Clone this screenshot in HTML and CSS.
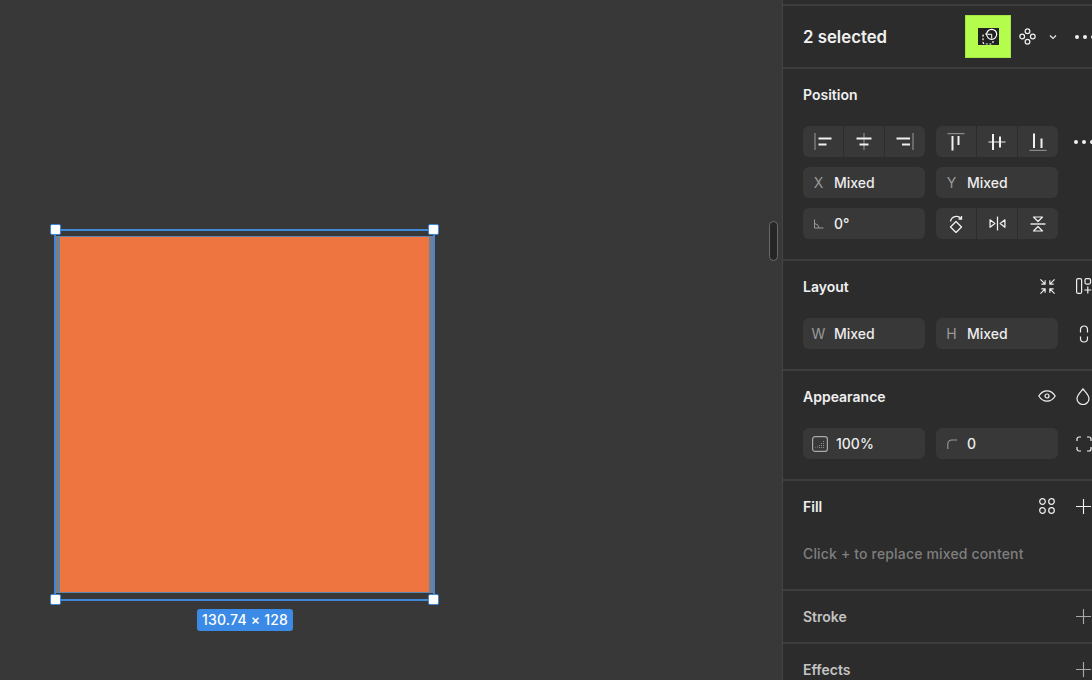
FILE: index.html
```html
<!DOCTYPE html>
<html lang="en">

<head>
    <meta charset="UTF-8">
    <title>Editor</title>
    <link rel="stylesheet" href="styles.css">
</head>

<body>
    <div class="app">
        <main class="canvas">
            <div class="selection">
                <div class="shape"></div>
                <span class="handle handle-tl"></span>
                <span class="handle handle-tr"></span>
                <span class="handle handle-bl"></span>
                <span class="handle handle-br"></span>
                <div class="size-label">130.74 × 128</div>
            </div>
            <div class="resize-grip"></div>
        </main>

        <aside class="panel">
            <div class="top-strip"></div>

            <section class="header">
                <h1>2 selected</h1>
                <div class="header-icons">
                    <div class="highlight">
                        <div class="mask-box">
                            <svg width="21" height="17" viewBox="0 0 21 17" fill="none" stroke="#fff" stroke-width="1.200">
                                <path d="M9 6H7A2 2 0 0 0 5 8V14A2 2 0 0 0 7 16H13A2 2 0 0 0 15 14V12.500" stroke-dasharray="2 1.600" />
                                <circle cx="13.700" cy="6.300" r="5" />
                                <path d="M9.500 6.300H13.700V10.500" stroke-width="1" />
                            </svg>
                        </div>
                    </div>
                    <svg class="icon-component" width="17" height="17" viewBox="0 0 18 18" fill="none" stroke="#f0f0f0" stroke-width="1.300">
                        <circle cx="9" cy="3.400" r="2.500" />
                        <circle cx="3.400" cy="9" r="2.500" />
                        <circle cx="14.600" cy="9" r="2.500" />
                        <circle cx="9" cy="14.600" r="2.500" />
                    </svg>
                    <svg class="icon-chevron" width="8" height="6" viewBox="0 0 8 6" fill="none" stroke="#e8e8e8" stroke-width="1.200">
                        <path d="M1 1.500L4 4.500L7 1.500" />
                    </svg>
                    <div class="dots"><i></i><i></i><i></i></div>
                </div>
            </section>

            <section class="section section-position">
                <h2>Position</h2>
                <div class="rows">
                    <div class="row">
                        <div class="group">
                            <button class="seg">
                                <svg width="18" height="18" viewBox="0 0 18 18" stroke="#f0f0f0" stroke-width="2" fill="none">
                                    <path d="M1 0V17" stroke="#8a8a8a" stroke-width="1.200" />
                                    <path d="M4.500 5.500H17.500M4.500 11.500H12.500" />
                                </svg>
                            </button>
                            <button class="seg">
                                <svg width="16" height="18" viewBox="0 0 16 18" stroke="#f0f0f0" stroke-width="2" fill="none">
                                    <path d="M8 0V17" stroke="#8a8a8a" stroke-width="1.200" />
                                    <path d="M0.500 5.500H15.500M3.500 11.500H12.500" />
                                </svg>
                            </button>
                            <button class="seg">
                                <svg width="18" height="18" viewBox="0 0 18 18" stroke="#f0f0f0" stroke-width="2" fill="none">
                                    <path d="M17 0V17" stroke="#8a8a8a" stroke-width="1.200" />
                                    <path d="M0.500 5.500H14M6 11.500H14" />
                                </svg>
                            </button>
                        </div>
                        <div class="group">
                            <button class="seg">
                                <svg width="18" height="18" viewBox="0 0 18 18" stroke="#f0f0f0" stroke-width="2" fill="none">
                                    <path d="M0.500 0.600H17.500" stroke="#8a8a8a" stroke-width="1.200" />
                                    <path d="M5.500 3V17.500M11.500 3V12" />
                                </svg>
                            </button>
                            <button class="seg">
                                <svg width="18" height="18" viewBox="0 0 18 18" stroke="#f0f0f0" stroke-width="2" fill="none">
                                    <path d="M0.500 9H17.500" stroke="#d0d0d0" stroke-width="1.200" />
                                    <path d="M5 1V17M12 3.500V14.500" />
                                </svg>
                            </button>
                            <button class="seg">
                                <svg width="18" height="18" viewBox="0 0 18 18" stroke="#f0f0f0" stroke-width="2" fill="none">
                                    <path d="M0.500 17.400H17.500" stroke="#8a8a8a" stroke-width="1.200" />
                                    <path d="M5 0.500V15M12.500 5.500V15" />
                                </svg>
                            </button>
                        </div>
                        <div class="dots dots-row"><i></i><i></i><i></i></div>
                    </div>
                    <div class="row">
                        <div class="field"><span class="tag">X</span><span class="val">Mixed</span></div>
                        <div class="field"><span class="tag">Y</span><span class="val">Mixed</span></div>
                    </div>
                    <div class="row">
                        <div class="field">
                            <span class="tag">
                                <svg width="11" height="10" viewBox="0 0 11 10" fill="none" stroke="#9a9a9a" stroke-width="1">
                                    <path d="M1.500 0.500V9H10.500M1.500 4.500A5 5 0 0 1 6 9" />
                                </svg>
                            </span>
                            <span class="val">0°</span>
                        </div>
                        <div class="group">
                            <button class="seg">
                                <svg width="16" height="18" viewBox="0 0 16 18" fill="none" stroke="#f0f0f0" stroke-width="1.300">
                                    <path d="M8 6.500L13.500 12L8 17.500L2.500 12Z" stroke-linejoin="round" />
                                    <path d="M2.500 6.500A6 6 0 0 1 13 3.500M13.500 1V4H10.500" />
                                </svg>
                            </button>
                            <button class="seg">
                                <svg width="17" height="15" viewBox="0 0 16 14" fill="none" stroke="#f0f0f0" stroke-width="1.200">
                                    <path d="M8 0.500V13.500" />
                                    <path d="M1 3.500L5.500 7L1 10.500Z M15 3.500L10.500 7L15 10.500Z" stroke-linejoin="round" />
                                </svg>
                            </button>
                            <button class="seg">
                                <svg width="16" height="16" viewBox="0 0 16 16" fill="none" stroke="#f0f0f0" stroke-width="1.200">
                                    <path d="M0.500 8H15.500" stroke-width="1.400" />
                                    <path d="M3.500 1H12.500L8 5.500Z M3.500 15H12.500L8 10.500Z" stroke-linejoin="round" />
                                </svg>
                            </button>
                        </div>
                    </div>
                </div>
            </section>

            <section class="section section-layout">
                <div class="title-row">
                    <h2>Layout</h2>
                    <div class="title-icons">
                        <span class="slot">
                            <svg width="17" height="17" viewBox="0 0 18 18" fill="none" stroke="#f0f0f0" stroke-width="1.200">
                                <path d="M1.500 1.500L6.500 6.500M2.500 6.500H6.500V2.500M16.500 1.500L11.500 6.500M15.500 6.500H11.500V2.500M1.500 16.500L6.500 11.500M2.500 11.500H6.500V15.500M16.500 16.500L11.500 11.500M15.500 11.500H11.500V15.500" />
                            </svg>
                        </span>
                        <span class="slot">
                            <svg width="18" height="16" viewBox="0 0 18 16" fill="none" stroke="#f0f0f0" stroke-width="1.200">
                                <rect x="2.600" y="0.600" width="5" height="14.800" rx="1.500" />
                                <rect x="11" y="0.600" width="5.500" height="5.500" rx="1.500" />
                                <path d="M13.800 8.500V15.500M10.300 12H17.300" />
                            </svg>
                        </span>
                    </div>
                </div>
                <div class="row">
                    <div class="field"><span class="tag">W</span><span class="val">Mixed</span></div>
                    <div class="field"><span class="tag">H</span><span class="val">Mixed</span></div>
                    <svg class="side-icon side-link" width="10" height="18" viewBox="0 0 10 18" fill="none" stroke="#f0f0f0" stroke-width="1.200">
                        <path d="M1.500 7.500V4.500A3.500 3.500 0 0 1 8.500 4.500V7.500M1.500 11.500V13.500A3.500 3.500 0 0 0 8.500 13.500V11.500" />
                    </svg>
                </div>
            </section>

            <section class="section section-appearance">
                <div class="title-row">
                    <h2>Appearance</h2>
                    <div class="title-icons">
                        <span class="slot">
                            <svg width="18" height="12" viewBox="0 0 18 12" fill="none" stroke="#f0f0f0" stroke-width="1.200">
                                <path d="M0.800 6C3 2.500 6 0.800 9 0.800S15 2.500 17.200 6C15 9.500 12 11.200 9 11.200S3 9.500 0.800 6Z" />
                                <circle cx="9" cy="6" r="2" />
                            </svg>
                        </span>
                        <span class="slot">
                            <svg width="14" height="17" viewBox="0 0 14 17" fill="none" stroke="#f0f0f0" stroke-width="1.200">
                                <path d="M7 1C9.500 4 13 7 13 10.500A6 6 0 0 1 1 10.500C1 7 4.500 4 7 1Z" />
                            </svg>
                        </span>
                    </div>
                </div>
                <div class="row">
                    <div class="field">
                        <span class="tag tag-wide">
                            <svg width="16" height="16" viewBox="0 0 16 16" fill="none">
                                <rect x="0.600" y="0.600" width="14.800" height="14.800" rx="2.500" stroke="#a8a8a8" stroke-width="1.200" />
                                <path d="M11.500 5V12M9.500 7V12M7.500 9V12M5.500 10.500V12M3.500 11.500V12" stroke="#8f8f8f" stroke-width="1" stroke-dasharray="1 1" />
                            </svg>
                        </span>
                        <span class="val">100%</span>
                    </div>
                    <div class="field">
                        <span class="tag">
                            <svg width="10" height="10" viewBox="0 0 10 10" fill="none" stroke="#9a9a9a" stroke-width="1.100">
                                <path d="M0.800 10V5A4 4 0 0 1 4.800 1H10" />
                            </svg>
                        </span>
                        <span class="val">0</span>
                    </div>
                    <svg class="side-icon" width="16" height="16" viewBox="0 0 16 16" fill="none" stroke="#f0f0f0" stroke-width="1.200">
                        <path d="M1 5V3A2 2 0 0 1 3 1H5M11 1H13A2 2 0 0 1 15 3V5M15 11V13A2 2 0 0 1 13 15H11M5 15H3A2 2 0 0 1 1 13V11" />
                    </svg>
                </div>
            </section>

            <section class="section section-fill">
                <div class="title-row">
                    <h2>Fill</h2>
                    <div class="title-icons">
                        <span class="slot">
                            <svg width="18" height="18" viewBox="0 0 18 18" fill="none" stroke="#f0f0f0" stroke-width="1.200">
                                <circle cx="4.500" cy="4.500" r="2.800" />
                                <circle cx="13.500" cy="4.500" r="2.800" />
                                <circle cx="4.500" cy="13.500" r="2.800" />
                                <circle cx="13.500" cy="13.500" r="2.800" />
                            </svg>
                        </span>
                        <span class="slot">
                            <svg width="15" height="15" viewBox="0 0 16 16" stroke="#f0f0f0" stroke-width="1.200">
                                <path d="M0 8H16M8 0V16" />
                            </svg>
                        </span>
                    </div>
                </div>
                <p class="hint">Click + to replace mixed content</p>
            </section>

            <section class="section section-collapsed">
                <div class="title-row">
                    <h2 class="muted">Stroke</h2>
                    <span class="slot">
                        <svg width="15" height="15" viewBox="0 0 16 16" stroke="#a6a6a6" stroke-width="1.200">
                            <path d="M0 8H16M8 0V16" />
                        </svg>
                    </span>
                </div>
            </section>

            <section class="section section-collapsed">
                <div class="title-row">
                    <h2 class="muted">Effects</h2>
                    <span class="slot">
                        <svg width="15" height="15" viewBox="0 0 16 16" stroke="#a6a6a6" stroke-width="1.200">
                            <path d="M0 8H16M8 0V16" />
                        </svg>
                    </span>
                </div>
            </section>
        </aside>
    </div>
</body>

</html>
```

FILE: styles.css
```css
* {
    padding: 0;
    margin: 0;
    box-sizing: border-box;
}

html,
body {
    height: 100%;
    overflow: hidden;
}

body {
    background: #383838;
    color: #f0f0f0;
    font-family: Inter, "Liberation Sans", sans-serif;
}

.app {
    display: flex;
    height: 680px;
    width: 1092px;
    overflow: hidden;
}

/* canvas */
.canvas {
    position: relative;
    width: 782px;
    flex-shrink: 0;
    background: #383838;
}

.selection {
    position: absolute;
    left: 54px;
    top: 229px;
    width: 381px;
    height: 372px;
    border: 2px solid #3f88d8;
}

.shape {
    position: absolute;
    left: 2px;
    top: 5px;
    right: 2px;
    bottom: 6px;
    background: #ee7440;
    border-style: solid;
    border-color: #5f86ad;
    border-width: 1px 2px;
    box-shadow: -2px 0 0 #8a7c75, 2px 0 0 #8a7c75;
}

.handle {
    position: absolute;
    width: 11px;
    height: 11px;
    background: #fff;
    border: 1.500px solid #3f88d8;
    border-radius: 2px;
}

.handle-tl {
    left: -6px;
    top: -7px;
}

.handle-tr {
    right: -6px;
    top: -7px;
}

.handle-bl {
    left: -6px;
    bottom: -6px;
}

.handle-br {
    right: -6px;
    bottom: -6px;
}

.size-label {
    position: absolute;
    left: 141px;
    top: 378px;
    height: 22px;
    padding: 0 5px;
    background: #3b8ae6;
    border-radius: 3px;
    color: #fff;
    font-size: 14px;
    font-weight: 500;
    letter-spacing: .2px;
    line-height: 22px;
    white-space: nowrap;
}

.resize-grip {
    position: absolute;
    left: 769px;
    top: 221px;
    width: 9px;
    height: 40px;
    background: #262626;
    border: 1.500px solid #6a6a6a;
    border-radius: 5px;
}

/* panel */
.panel {
    flex: 1;
    background: #2c2c2c;
    border-left: 1px solid #444;
    overflow: hidden;
}

.top-strip {
    height: 6px;
    border-bottom: 2px solid #3d3d3d;
}

.header {
    display: flex;
    align-items: center;
    justify-content: space-between;
    height: 63px;
    padding-left: 20px;
    border-bottom: 2px solid #3d3d3d;
}

.header h1 {
    font-size: 16.800px;
    font-weight: 600;
}

.header-icons {
    display: flex;
    align-items: center;
    width: 127px;
    flex-shrink: 0;
}

.header-icons svg {
    flex-shrink: 0;
}

.highlight {
    display: flex;
    align-items: center;
    justify-content: center;
    width: 46px;
    height: 43px;
    flex-shrink: 0;
    background: #b5fd4c;
    border: 1px solid #a5e544;
}

.mask-box {
    width: 21px;
    height: 17px;
    background: #222;
    overflow: hidden;
}

.mask-box svg {
    display: block;
}

.icon-component {
    margin-left: 8px;
}

.icon-chevron {
    margin-left: 13px;
}

.dots {
    display: flex;
    gap: 4px;
    margin-left: 18px;
    flex-shrink: 0;
}

.dots i {
    width: 4px;
    height: 4px;
    background: #f0f0f0;
    border-radius: 50%;
}

.section {
    padding-left: 20px;
    border-bottom: 2px solid #3d3d3d;
}

.section h2 {
    font-size: 14px;
    font-weight: 600;
    line-height: 17px;
}

.section h2.muted {
    color: #c4c4c4;
}

.section-position {
    height: 192px;
    padding-top: 17px;
}

.rows {
    display: flex;
    flex-direction: column;
    gap: 10px;
    margin-top: 23px;
}

.row {
    display: flex;
    align-items: center;
    gap: 11px;
}

.group {
    display: flex;
    gap: 1px;
    width: 122px;
    height: 31px;
    flex-shrink: 0;
}

.seg {
    display: flex;
    align-items: center;
    justify-content: center;
    flex: 1;
    background: #383838;
    border: none;
}

.seg:first-child {
    border-radius: 6px 0 0 6px;
}

.seg:last-child {
    border-radius: 0 6px 6px 0;
}

.dots-row {
    margin-left: 5px;
}

.field {
    display: flex;
    align-items: center;
    width: 122px;
    height: 31px;
    flex-shrink: 0;
    background: #383838;
    border-radius: 6px;
    font-size: 14px;
    font-weight: 500;
}

.tag {
    display: flex;
    align-items: center;
    justify-content: center;
    width: 31px;
    color: #9a9a9a;
    font-weight: 400;
}

.tag-wide {
    width: 33px;
}

.val {
    color: #ededed;
}

.title-row {
    display: flex;
    align-items: center;
    justify-content: space-between;
    width: 298px;
    height: 18px;
}

.title-icons {
    display: flex;
    flex-shrink: 0;
}

/* icon cell, the panel clips the last one at the window edge */
.slot {
    display: flex;
    align-items: center;
    justify-content: center;
    width: 36px;
    height: 18px;
    flex-shrink: 0;
}

.section-layout,
.section-appearance,
.section-fill {
    height: 110px;
    padding-top: 16px;
}

.section-layout .row,
.section-appearance .row {
    margin-top: 23px;
}

.side-icon {
    flex-shrink: 0;
    margin-left: 7px;
}

.side-link {
    margin-left: 10px;
}

.hint {
    margin-top: 30px;
    color: #7f7f7f;
    font-size: 14px;
    font-weight: 500;
    letter-spacing: .16px;
    line-height: 17px;
    white-space: nowrap;
}

.section-collapsed {
    height: 53px;
    padding-top: 16px;
}
```
